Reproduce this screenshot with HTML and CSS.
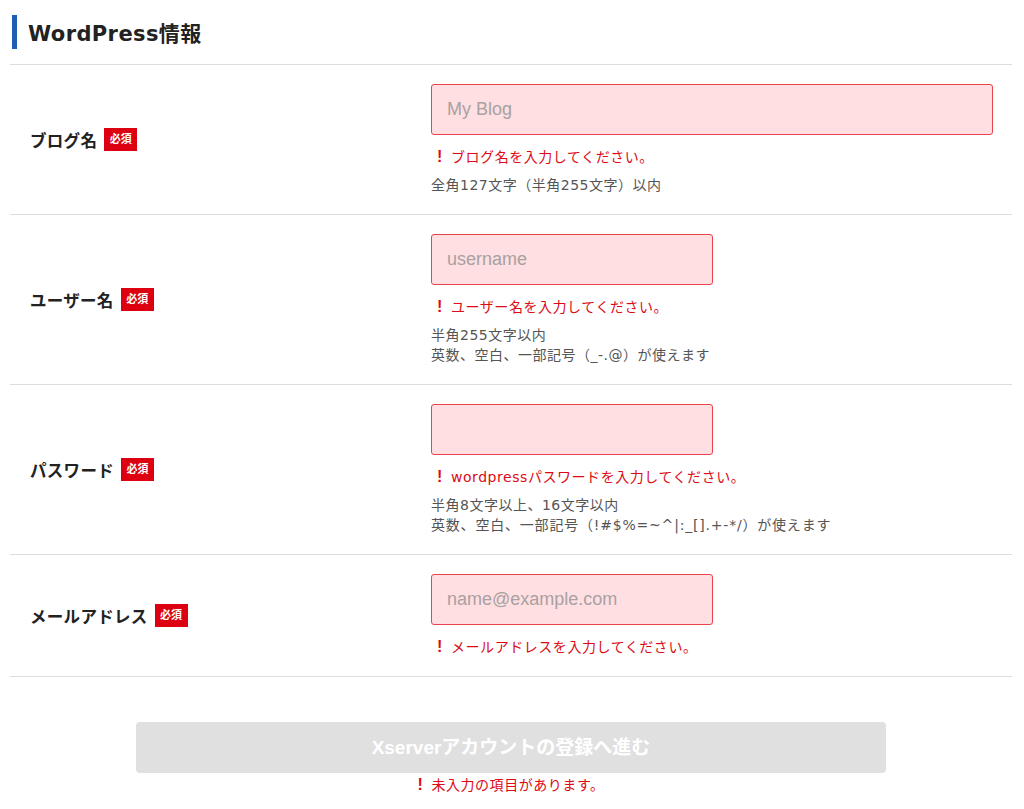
FILE: index.html
```html
<!DOCTYPE html>
<html>
	<head>
		<title>WordPress情報</title>
		<link rel="stylesheet" href="styles.css">
	</head>

	<body>
		<div class="wrap">
			<h2 class="heading">WordPress情報</h2>

			<!-- blog name -->
			<div class="row">
				<div class="label">ブログ名<span class="req">必須</span></div>
				<div class="field">
					<div class="input wide"><span class="ph">My Blog</span></div>
					<p class="err"><span class="mark">!</span>ブログ名を入力してください。</p>
					<p class="help">全角127文字（半角255文字）以内</p>
				</div>
			</div>

			<!-- user -->
			<div class="row">
				<div class="label">ユーザー名<span class="req">必須</span></div>
				<div class="field">
					<div class="input"><span class="ph">username</span></div>
					<p class="err"><span class="mark">!</span>ユーザー名を入力してください。</p>
					<p class="help">半角255文字以内<br>英数、空白、一部記号（_-.@）が使えます</p>
				</div>
			</div>

			<!-- password -->
			<div class="row">
				<div class="label">パスワード<span class="req">必須</span></div>
				<div class="field">
					<div class="input"></div>
					<p class="err"><span class="mark">!</span>wordpressパスワードを入力してください。</p>
					<p class="help">半角8文字以上、16文字以内<br><span class="sym">英数、空白、一部記号（!#$%=~^|:_[].+-*/）が使えます</span></p>
				</div>
			</div>

			<!-- mail -->
			<div class="row">
				<div class="label">メールアドレス<span class="req">必須</span></div>
				<div class="field">
					<div class="input"><span class="ph">name@example.com</span></div>
					<p class="err"><span class="mark">!</span>メールアドレスを入力してください。</p>
				</div>
			</div>

			<div class="submit">
				<div class="btn">Xserverアカウントの登録へ進む</div>
				<p class="err center"><span class="mark">!</span>未入力の項目があります。</p>
			</div>
		</div>
	</body>
</html>
```

FILE: styles.css
```css
body {
	margin: 0;
	background-color: #fff;
	font-family: "DejaVu Sans", "Noto Sans CJK JP", sans-serif;
	color: #333;
}

.wrap {
	padding: 0 12px 0 10px;
}

/* section title with the blue bar */
h2.heading {
	margin: 0;
	height: 64px;
	display: flex;
	align-items: center;
	border-bottom: 1px solid #ddd;
	font-size: 21px;
	font-weight: bold;
	color: #222;
	letter-spacing: 0.4px;
}

h2.heading::before {
	content: "";
	width: 5px;
	height: 34px;
	background-color: #1f5fb0;
	margin: 0 11px 0 2px;
}

div.row {
	display: grid;
	grid-template-columns: 421px 1fr;
	border-bottom: 1px solid #ddd;
	padding: 19px 0;
}

div.label {
	display: flex;
	align-items: center;
	padding-left: 20px;
	font-size: 16.5px;
	font-weight: bold;
	color: #222;
	letter-spacing: 0.3px;
}

span.req {
	display: inline-block;
	margin-left: 7px;
	background-color: #dc0010;
	color: #fff;
	font-size: 11px;
	font-weight: bold;
	letter-spacing: 0;
	width: 33px;
	height: 23px;
	line-height: 23px;
	text-align: center;
}

div.field {
	padding-right: 19px;
}

div.input {
	box-sizing: border-box;
	width: 282px;
	height: 51px;
	border: 1px solid #e8444c;
	border-radius: 3px;
	background-color: #ffdfe1;
	display: flex;
	align-items: center;
	padding-left: 15px;
}

div.input.wide {
	width: 100%;
}

span.ph {
	font-family: "Liberation Sans", Arial, sans-serif;
	font-size: 18px;
	color: #a9a1a2;
}

p.err {
	margin: 12px 0 0;
	line-height: 20px;
	font-size: 14px;
	letter-spacing: 0.55px;
	color: #dc0a14;
	padding-left: 6px;
}

span.mark {
	display: inline-block;
	font-weight: bold;
	font-size: 16px;
	width: 14px;
	font-family: "Liberation Sans", Arial, sans-serif;
}

p.help {
	margin: 8px 0 0;
	line-height: 20px;
	font-size: 14px;
	letter-spacing: 0.5px;
	color: #555;
}

/* symbol list runs a bit wider */
span.sym {
	letter-spacing: 0.8px;
}

div.submit {
	padding-top: 45px;
	display: flex;
	flex-direction: column;
	align-items: center;
}

div.btn {
	width: 750px;
	height: 51px;
	line-height: 51px;
	border-radius: 4px;
	background-color: #e0e0e0;
	color: #fff;
	text-align: center;
	font-size: 19px;
	font-weight: bold;
	font-family: "Liberation Sans", "Noto Sans CJK JP", sans-serif;
}

p.err.center {
	margin-top: 2px;
	padding-left: 0;
}
```
